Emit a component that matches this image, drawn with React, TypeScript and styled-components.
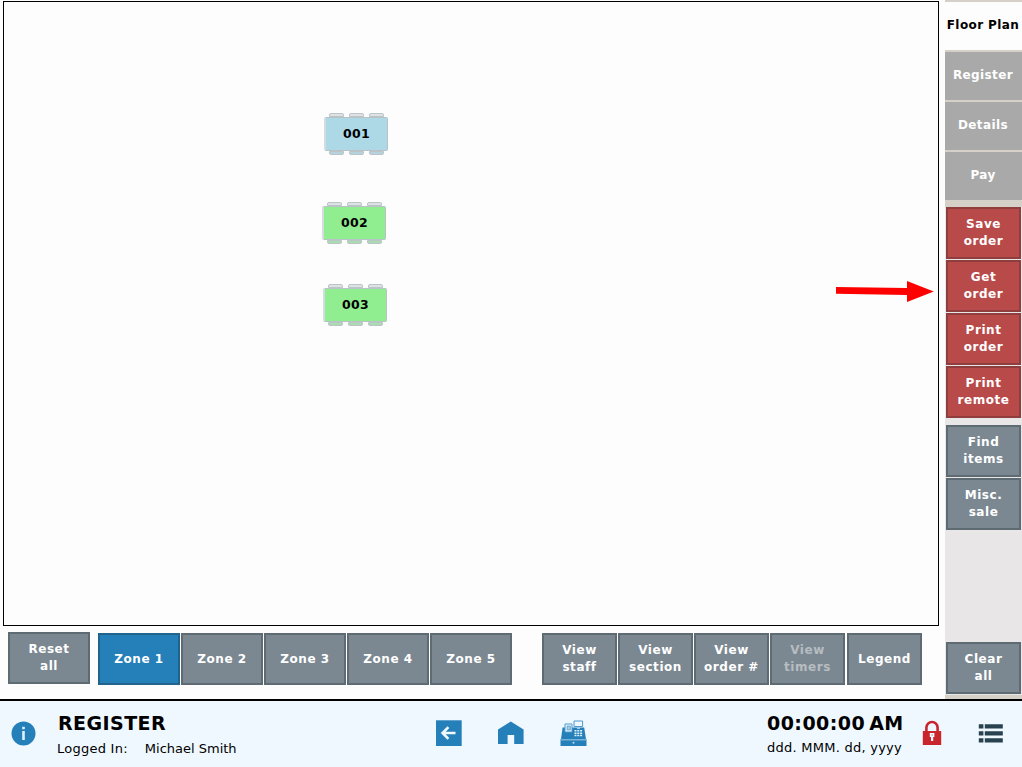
import React from 'react';
import styled, { createGlobalStyle, css } from 'styled-components';

const GlobalStyle = createGlobalStyle`
  * { box-sizing: border-box; }
  html, body { margin: 0; padding: 0; overflow: hidden; }
  body { background: #fdfdfd; font-family: 'DejaVu Sans', Verdana, sans-serif; }
`;

const Screen = styled.div`
  display: flex;
  flex-direction: column;
  width: 1022px;
  height: 767px;
  overflow: hidden;
  background: #fdfdfd;
`;

const Workspace = styled.div`
  display: flex;
  height: 699px;
`;

const Main = styled.main`
  display: flex;
  flex-direction: column;
  width: 945px;
  padding: 1px 6px 0 3px;
`;

const FloorCanvas = styled.section`
  position: relative;
  width: 936px;
  height: 625px;
  border: 1px solid #000;
  background: #fdfdfd;
`;

const TableNode = styled.div<{ $x: number; $y: number }>`
  position: absolute;
  left: ${(p) => p.$x}px;
  top: ${(p) => p.$y}px;
  display: flex;
  flex-direction: column;
  width: 64px;
`;

const Chairs = styled.div<{ $color: string; $bottom?: boolean }>`
  display: flex;
  gap: 5px;
  height: 4px;
  padding-left: 5px;
  i {
    width: 15px;
    height: 4px;
    border: 1px solid #bcc4c7;
    background: ${(p) => (p.$bottom ? p.$color : '#dde3e4')};
    border-radius: ${(p) => (p.$bottom ? '0 0 2px 2px' : '2px 2px 0 0')};
  }
`;

const TableTop = styled.div<{ $color: string }>`
  display: flex;
  align-items: center;
  justify-content: center;
  height: 34px;
  padding-bottom: 1px;
  border: 1px solid #b9c2c6;
  border-left: 2px solid #d5dcdf;
  border-radius: 2px;
  background: ${(p) => p.$color};
  color: #000;
  font-size: 12.5px;
  line-height: 15px;
  font-weight: 700;
  letter-spacing: 0.3px;
`;

const Arrow = styled.svg`
  position: absolute;
  left: 832px;
  top: 276px;
  display: block;
`;

const ActionBar = styled.div`
  display: flex;
  padding: 6px 0 0 5px;
`;

const ButtonRow = styled.div<{ $gap: number }>`
  display: flex;
  gap: 1px;
  margin: 1px 0 0 ${(p) => p.$gap}px;
`;

const tones = {
  slate: css`background: #7b8892; border-color: #5f6b73;`,
  blue: css`background: #2580b9; border-color: #20648e;`,
  red: css`background: #b94a4a; border-color: #8f3d3d;`,
};

const Button = styled.button<{ $tone?: keyof typeof tones; $width?: number; $dim?: boolean; $offset?: number }>`
  flex: none;
  display: flex;
  align-items: center;
  justify-content: center;
  width: ${(p) => p.$width ?? 75}px;
  height: 52px;
  margin: 0 0 0 ${(p) => p.$offset ?? 0}px;
  padding: 0;
  border: 2px solid;
  ${(p) => tones[p.$tone ?? 'slate']}
  color: ${(p) => (p.$dim ? '#b7bdc1' : '#fff')};
  font: 700 12px/17px 'DejaVu Sans', Verdana, sans-serif;
  letter-spacing: 0.55px;
  text-align: center;
  white-space: pre-line;
`;

const Sidebar = styled.aside`
  display: flex;
  flex-direction: column;
  width: 77px;
  background: #e8e6e7;
`;

const Tabs = styled.nav`
  display: flex;
  flex-direction: column;
  gap: 2px;
  height: 207px;
  padding-top: 2px;
  background: #d5d0c8;
`;

const Tab = styled.div<{ $active?: boolean }>`
  display: flex;
  align-items: center;
  justify-content: center;
  height: 48px;
  padding: 0 1px 1px 0;
  background: ${(p) => (p.$active ? '#fdfdfd' : '#a9a9a9')};
  color: ${(p) => (p.$active ? '#000' : '#fff')};
  font-size: 12px;
  line-height: 17px;
  font-weight: 700;
  letter-spacing: 0.4px;
  white-space: nowrap;
`;

const SideGroup = styled.div<{ $top?: number; $last?: boolean }>`
  display: flex;
  flex-direction: column;
  gap: 1px;
  padding-left: 1px;
  margin-top: ${(p) => (p.$last ? 'auto' : `${p.$top ?? 0}px`)};
  ${(p) => p.$last && css`border-bottom: 4px solid #d5d0c8; padding-bottom: 1px;`}
`;

const Footer = styled.footer`
  display: flex;
  height: 68px;
  border-top: 2px solid #000;
  background: #eff8ff;
  color: #000;
  svg { display: block; flex: none; }
`;

const InfoSlot = styled.div`
  width: 57px;
  padding: 20px 0 0 11px;
`;

const Session = styled.div`
  width: 378px;
  padding-top: 10px;
`;

const Title = styled.div`
  padding-left: 1px;
  font-size: 19px;
  line-height: 24px;
  font-weight: 700;
  letter-spacing: 0.45px;
`;

const SessionLine = styled.div`
  display: flex;
  gap: 17px;
  margin-top: 5px;
  font-size: 13px;
  line-height: 17px;
  white-space: nowrap;
  span:first-child { letter-spacing: 0.25px; }
`;

const NavIcons = styled.div`
  display: flex;
  width: 332px;
  padding-top: 19px;
  gap: 36px;
`;

const Clock = styled.div`
  width: 155px;
  padding-top: 10px;
  white-space: nowrap;
`;

const Time = styled.div`
  font-size: 19px;
  line-height: 24px;
  font-weight: 700;
  letter-spacing: 0.45px;
  word-spacing: -3px;
`;

const DateLine = styled.div`
  margin-top: 4px;
  font-size: 13px;
  line-height: 17px;
  letter-spacing: 0.25px;
`;

const RightIcons = styled.div`
  display: flex;
  gap: 36px;
  padding-top: 19px;
`;

const tables = [
  { id: '001', x: 320, y: 111, color: '#add8e6', chair: '#b5d3dc' },
  { id: '002', x: 318, y: 200, color: '#90ee90', chair: '#a9dcb0' },
  { id: '003', x: 319, y: 282, color: '#90ee90', chair: '#a9dcb0' },
];

const zones = ['Zone 1', 'Zone 2', 'Zone 3', 'Zone 4', 'Zone 5'];

const FloorTable = ({ id, x, y, color, chair }: (typeof tables)[number]) => (
  <TableNode $x={x} $y={y}>
    <Chairs $color={chair}><i /><i /><i /></Chairs>
    <TableTop $color={color}>{id}</TableTop>
    <Chairs $color={chair} $bottom><i /><i /><i /></Chairs>
  </TableNode>
);

const InfoIcon = () => (
  <svg width="25" height="25" viewBox="0 0 25 25">
    <circle cx="12.5" cy="12.5" r="12" fill="#2580b9" />
    <path d="M11.2 10h2.6v9h-2.6zM11.2 5.8h2.6v2.4h-2.6z" fill="#dff1fb" />
  </svg>
);

const BackIcon = () => (
  <svg width="27" height="27" viewBox="0 0 27 27">
    <path d="M1 .3h25.7V26H1z" fill="#2580b9" />
    <path d="M20.5 13H8M13.4 7.2L7.6 13l5.8 5.8" fill="none" stroke="#eff8ff" strokeWidth="2.6" />
  </svg>
);

const HomeIcon = () => (
  <svg width="26" height="27" viewBox="0 0 26 27">
    <path d="M0 9.5L12.8 1.5 25.6 9.5V24H16.2V15H9.6V24H0z" fill="#2580b9" />
  </svg>
);

const TillIcon = () => (
  <svg width="27" height="27" viewBox="0 0 27 27">
    <path d="M2.6 7.5h21.6L26 19H1z" fill="#2580b9" />
    <path d="M.5 19h26v7H.5z" fill="#2580b9" />
    <path d="M.5 19.2h26v1.2H.5z" fill="#8fc0df" />
    <path d="M5 4h7v8H5z" fill="#eff8ff" stroke="#4f9aca" />
    <path d="M7 6h3.4v4H7z" fill="#a5cce5" stroke="#4f9aca" strokeWidth=".7" />
    <path d="M17 6.5h3V9h-3z" fill="#9ccbe5" />
    <path d="M14 1h8.6v5.5h-8.6z" fill="#eff8ff" stroke="#4f9aca" />
    <path d="M14.5 10h2v1.5h-2zM17.3 10h2v1.5h-2zM20.1 10h2v1.5h-2zM14.5 12.4h2v1.5h-2zM17.3 12.4h2v1.5h-2zM20.1 12.4h2v1.5h-2zM14.5 14.8h2v1.5h-2zM17.3 14.8h2v1.5h-2zM20.1 14.8h2v1.5h-2z" fill="#e4f3fb" />
    <circle cx="13.5" cy="22.8" r="1" fill="#b9dcf0" />
  </svg>
);

const LockIcon = () => (
  <svg width="20" height="27" viewBox="0 0 20 27">
    <path d="M4.4 13V7.6a5.6 5.6 0 0 1 11.2 0V13" fill="none" stroke="#c9252d" strokeWidth="2.6" />
    <path d="M.8 11h18.4v14H.8z" fill="#c9252d" />
    <path d="M7.8 13h4.6v4h-1.2v4H9v-4H7.8z" fill="#eff8ff" />
    <path d="M9.6 14.4h1v1.2h-1z" fill="#c9252d" />
  </svg>
);

const ListIcon = () => (
  <svg width="25" height="27" viewBox="0 0 25 27">
    <path d="M.8 4.2h4.6v4.2H.8zM6.8 4.2h18v4.2H6.8zM.8 11.2h4.6v4.4H.8zM6.8 11.2h18v4.4H6.8zM.8 18.2h4.6v4.4H.8zM6.8 18.2h18v4.4H6.8z" fill="#29424f" />
  </svg>
);

export default function App() {
  return (
    <Screen>
      <GlobalStyle />
      <Workspace>
        <Main>
          <FloorCanvas>
            {tables.map((t) => <FloorTable key={t.id} {...t} />)}
            <Arrow width="100" height="26" viewBox="0 0 100 26">
              <path d="M0 9L71 10V3L97.8 13.4 71 24V17L0 15.8z" fill="#fe0000" />
            </Arrow>
          </FloorCanvas>
          <ActionBar>
            <Button $width={82}>{'Reset\nall'}</Button>
            <ButtonRow $gap={8}>
              {zones.map((z, i) => <Button key={z} $width={82} $tone={i === 0 ? 'blue' : 'slate'}>{z}</Button>)}
            </ButtonRow>
            <ButtonRow $gap={30}>
              <Button>{'View\nstaff'}</Button>
              <Button>{'View\nsection'}</Button>
              <Button>{'View\norder #'}</Button>
              <Button $dim>{'View\ntimers'}</Button>
              <Button $offset={1}>Legend</Button>
            </ButtonRow>
          </ActionBar>
        </Main>
        <Sidebar>
          <Tabs>
            <Tab $active>Floor Plan</Tab>
            <Tab>Register</Tab>
            <Tab>Details</Tab>
            <Tab>Pay</Tab>
          </Tabs>
          <SideGroup>
            <Button $tone="red">{'Save\norder'}</Button>
            <Button $tone="red">{'Get\norder'}</Button>
            <Button $tone="red">{'Print\norder'}</Button>
            <Button $tone="red">{'Print\nremote'}</Button>
          </SideGroup>
          <SideGroup $top={7}>
            <Button>{'Find\nitems'}</Button>
            <Button>{'Misc.\nsale'}</Button>
          </SideGroup>
          <SideGroup $last>
            <Button>{'Clear\nall'}</Button>
          </SideGroup>
        </Sidebar>
      </Workspace>
      <Footer>
        <InfoSlot><InfoIcon /></InfoSlot>
        <Session>
          <Title>REGISTER</Title>
          <SessionLine><span>Logged In:</span><span>Michael Smith</span></SessionLine>
        </Session>
        <NavIcons><BackIcon /><HomeIcon /><TillIcon /></NavIcons>
        <Clock>
          <Time>00:00:00 AM</Time>
          <DateLine>ddd. MMM. dd, yyyy</DateLine>
        </Clock>
        <RightIcons><LockIcon /><ListIcon /></RightIcons>
      </Footer>
    </Screen>
  );
}
